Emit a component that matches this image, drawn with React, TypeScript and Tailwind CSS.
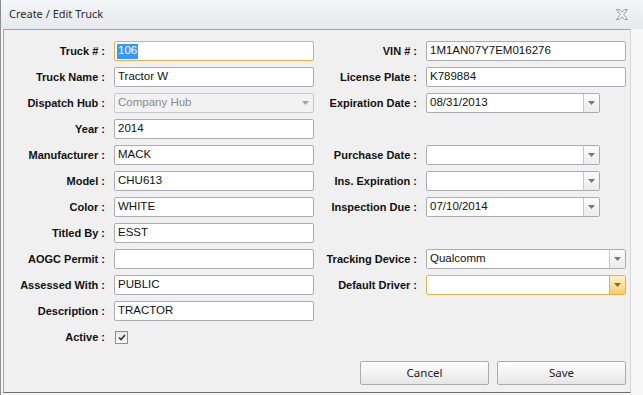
import React from "react";

const labelCls =
  "text-right text-[11px] font-bold text-[#111] whitespace-nowrap [font-family:'Liberation_Sans',Arial,sans-serif] leading-[20px]";
const inputBase =
  "h-[20px] border rounded-[2px] flex items-center text-[11.5px] [font-family:'Liberation_Sans',Arial,sans-serif] leading-none";

function TextBox({ value, w = "w-[200px]" }: { value: string; w?: string }) {
  return (
    <div className={`${inputBase} ${w} bg-white border-[#abadb3] pl-[3px] text-[#111]`}>
      {value}
    </div>
  );
}

function Arrow({ color = "#7a7a7a" }: { color?: string }) {
  return (
    <svg width="7" height="4" viewBox="0 0 7 4">
      <path d="M0 0 H7 L3.5 4 Z" fill={color} />
    </svg>
  );
}

function Combo({
  value,
  w = "w-[200px]",
  disabled = false,
  focus = false,
}: {
  value: string;
  w?: string;
  disabled?: boolean;
  focus?: boolean;
}) {
  return (
    <div
      className={`${inputBase} ${w} ${
        disabled
          ? "bg-[#f2f2f2] border-[#c9c9c9] text-[#8a8a8a]"
          : focus
          ? "bg-white border-[#e8b04e] text-[#111]"
          : "bg-white border-[#abadb3] text-[#111]"
      } overflow-hidden`}
    >
      <div className="flex-1 pl-[3px]">{value}</div>
      <div
        className={`h-full w-[16px] flex items-center justify-center ${
          disabled
            ? ""
            : focus
            ? "border-l border-[#e8b04e] bg-gradient-to-b from-[#fff3c8] to-[#f8cd6a]"
            : "border-l border-[#c8c8c8] bg-gradient-to-b from-[#fbfbfb] to-[#ececec]"
        }`}
      >
        <Arrow color={disabled ? "#a0a0a0" : focus ? "#8a6a2a" : "#777"} />
      </div>
    </div>
  );
}

function Row({ children }: { children?: React.ReactNode }) {
  return <div className="flex h-[20px]">{children}</div>;
}

function Left({ label, children }: { label: string; children: React.ReactNode }) {
  return (
    <div className="flex w-[310px]">
      <div className={`${labelCls} w-[101px]`}>{label}</div>
      <div className="ml-[9px]">{children}</div>
    </div>
  );
}

function Right({ label, children }: { label: string; children: React.ReactNode }) {
  return (
    <div className="flex">
      <div className={`${labelCls} w-[103px]`}>{label}</div>
      <div className="ml-[9px]">{children}</div>
    </div>
  );
}

function CloseIcon() {
  return (
    <svg width="12" height="11" viewBox="0 0 12 11">
      <path
        d="M0.5 0.5 H3.5 L6 3.2 L8.5 0.5 H11.5 L7.6 5.5 L11.5 10.5 H8.5 L6 7.8 L3.5 10.5 H0.5 L4.4 5.5 Z"
        fill="#f4f4f4"
        stroke="#9a9a9a"
        strokeWidth="1"
      />
    </svg>
  );
}

export default function App() {
  return (
    <div className="w-[643px] h-[395px] bg-[#f7f7f7] border-l border-[#8c8c8c] overflow-hidden flex flex-col">
      <div className="h-[29px] shrink-0 flex items-center justify-between bg-gradient-to-b from-[#f4f6f8] to-[#e6e9ed] pl-[8px] pr-[15px]">
        <span className="text-[11px] text-[#2b2b2b] [font-family:'Noto_Sans',sans-serif]">
          Create / Edit Truck
        </span>
        <CloseIcon />
      </div>
      <div className="ml-[2px] w-[628px] h-[364px] border border-[#a3a3a3] border-r-[#d6d6d6] border-b-[#6e6e6e] bg-[#f0f0f0] pt-[11px] flex flex-col">
        <div className="flex flex-col gap-[6px]">
          <Row>
            <Left label="Truck # :">
              <div className={`${inputBase} w-[200px] bg-white border-[#e8b04e] pl-[2px]`}>
                <span className="bg-[#3399ff] text-white px-[1px] h-[15px] flex items-center">106</span>
              </div>
            </Left>
            <Right label="VIN # :">
              <TextBox value="1M1AN07Y7EM016276" />
            </Right>
          </Row>
          <Row>
            <Left label="Truck Name :">
              <TextBox value="Tractor W" />
            </Left>
            <Right label="License Plate :">
              <TextBox value="K789884" />
            </Right>
          </Row>
          <Row>
            <Left label="Dispatch Hub :">
              <Combo value="Company Hub" disabled />
            </Left>
            <Right label="Expiration Date :">
              <Combo value="08/31/2013" w="w-[174px]" />
            </Right>
          </Row>
          <Row>
            <Left label="Year :">
              <TextBox value="2014" />
            </Left>
          </Row>
          <Row>
            <Left label="Manufacturer :">
              <TextBox value="MACK" />
            </Left>
            <Right label="Purchase Date :">
              <Combo value="" w="w-[174px]" />
            </Right>
          </Row>
          <Row>
            <Left label="Model :">
              <TextBox value="CHU613" />
            </Left>
            <Right label="Ins. Expiration :">
              <Combo value="" w="w-[174px]" />
            </Right>
          </Row>
          <Row>
            <Left label="Color :">
              <TextBox value="WHITE" />
            </Left>
            <Right label="Inspection Due :">
              <Combo value="07/10/2014" w="w-[174px]" />
            </Right>
          </Row>
          <Row>
            <Left label="Titled By :">
              <TextBox value="ESST" />
            </Left>
          </Row>
          <Row>
            <Left label="AOGC Permit :">
              <TextBox value="" />
            </Left>
            <Right label="Tracking Device :">
              <Combo value="Qualcomm" />
            </Right>
          </Row>
          <Row>
            <Left label="Assessed With :">
              <TextBox value="PUBLIC" />
            </Left>
            <Right label="Default Driver :">
              <Combo value="" focus />
            </Right>
          </Row>
          <Row>
            <Left label="Description :">
              <TextBox value="TRACTOR" />
            </Left>
          </Row>
          <Row>
            <Left label="Active :">
              <div className="h-[20px] flex items-center pl-[1px]">
                <div className="w-[13px] h-[13px] border border-[#8f8f8f] bg-gradient-to-b from-[#e6e6e6] to-[#fafafa] flex items-center justify-center">
                  <svg width="8" height="7" viewBox="0 0 8 7">
                    <path d="M1 3.5 L3 5.5 L7 1" fill="none" stroke="#333" strokeWidth="1.6" />
                  </svg>
                </div>
              </div>
            </Left>
          </Row>
        </div>
        <div className="flex justify-end gap-[8px] mt-[14px] pr-[4px]">
          {["Cancel", "Save"].map((t) => (
            <div
              key={t}
              className="w-[129px] h-[24px] border border-[#acacac] rounded-[2px] bg-gradient-to-b from-[#ffffff] to-[#e6e6e6] flex items-center justify-center text-[11.5px] text-[#222] [font-family:'Noto_Sans',sans-serif]"
            >
              {t}
            </div>
          ))}
        </div>
      </div>
    </div>
  );
}
